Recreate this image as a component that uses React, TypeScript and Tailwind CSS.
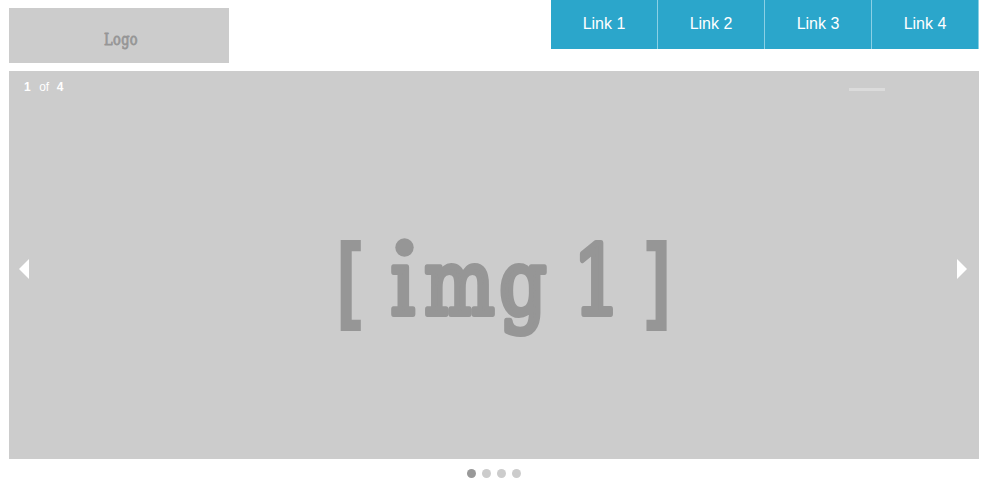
const links = ["Link 1", "Link 2", "Link 3", "Link 4"];

export default function App() {
  return (
    <div className="h-[484px] w-[992px] overflow-hidden bg-white pl-[9px] font-['Liberation_Sans',Arial,sans-serif]">
      <header className="flex h-[71px] w-[970px] items-start justify-between">
        <div className="mt-2 h-[55px] w-[220px] bg-[#ccc]">
          <svg width="220" height="55" className="block" fill="#969696" stroke="#969696" strokeWidth="0.9" strokeLinejoin="round">
            <text fontSize="17.5" dx="0 0.6 0.4 0.4" transform="translate(95 36.8) scale(0.74 1)" className="font-['DejaVu_Serif',serif]">Logo</text>
          </svg>
        </div>
        <nav className="flex h-[49px] bg-[#2ba6cb]">
          {links.map((link) => (
            <a key={link} href="#" className="h-full w-[107px] border-r border-[#8bd0e5] text-center text-base leading-[47px] text-white">
              {link}
            </a>
          ))}
        </nav>
      </header>

      <main className="relative h-[388px] w-[970px] bg-[#ccc]">
        <svg width="970" height="388" className="block" fill="#969696">
          <g className="font-['DejaVu_Sans',sans-serif] font-bold" fontSize="102">
            <text transform="translate(326 245.5) scale(0.65 1)">[</text>
            <text transform="translate(633 245.5) scale(0.65 1)">]</text>
          </g>
          <g className="font-['DejaVu_Serif',serif]" stroke="#969696" strokeLinejoin="round" strokeWidth="6">
            <text fontSize="90" dx="0 12 6" transform="translate(382 242.5) scale(0.82 1)">img</text>
            <text fontSize="95" transform="translate(564 242.5) scale(0.8 1)">1</text>
          </g>
          {/* Enlarged round dot of the i */}
          <rect x="380" y="170" width="26" height="21.5" fill="#ccc" />
          <circle cx="395.5" cy="176.5" r="9.2" />
        </svg>
        <div className="absolute left-[15px] top-[9px] flex gap-[7.5px] text-xs leading-[14px] text-white">
          <b>1</b>
          <span className="ml-px">of</span>
          <b>4</b>
        </div>
        <div className="absolute left-[840px] top-[17px] h-[3px] w-9 bg-[#dbdbdb]" />
        <button aria-label="Previous" className="absolute left-[10px] top-[188px] border-y-[10px] border-r-[10px] border-y-transparent border-r-white" />
        <button aria-label="Next" className="absolute left-[948px] top-[188px] border-y-[10px] border-l-[10px] border-y-transparent border-l-white" />
      </main>

      <div className="mt-[10px] flex gap-[6px] pl-[458px]">
        <span className="size-[9px] rounded-full bg-[#999]" />
        <span className="size-[9px] rounded-full bg-[#ccc]" />
        <span className="size-[9px] rounded-full bg-[#ccc]" />
        <span className="size-[9px] rounded-full bg-[#ccc]" />
      </div>
    </div>
  );
}
